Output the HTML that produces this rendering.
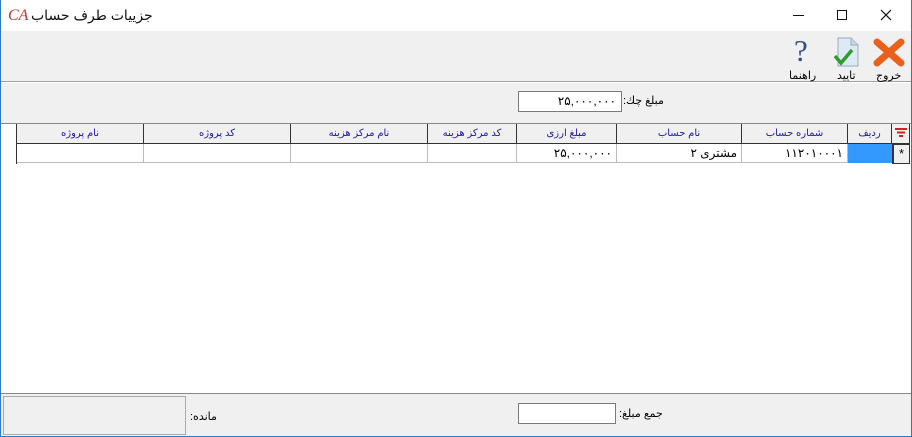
<!DOCTYPE html>
<html><head><meta charset="utf-8"><style>
*{margin:0;padding:0;box-sizing:border-box}
body{width:912px;height:437px;background:#fff;font-family:Tahoma,"Liberation Sans","DejaVu Sans",sans-serif;position:relative;overflow:hidden;font-size:11px}
.a{position:absolute}
.r{direction:rtl}
.win{left:0;top:0;width:912px;height:437px;border:1px solid #2b79c9;border-top:none}
.title{left:1px;top:0;width:910px;height:31px;background:#fff}
.tb{left:1px;top:31px;width:910px;height:51px;background:#f0f0f0;border-bottom:1px solid #a0a0a0}
.top2{left:1px;top:83px;width:910px;height:40px;background:#f0f0f0}
.grid{left:1px;top:123px;width:910px;height:270px;background:#fff;border-top:1px solid #888}
.foot{left:1px;top:393px;width:910px;height:43px;background:#f0f0f0;border-top:1px solid #888}
.hc{top:124px;height:20px;background:#f0f0f0;border-right:1px solid #333;border-bottom:1px solid #333;color:#1a1aa0;text-align:center;font-size:10px;line-height:19px;direction:rtl}
.dc{top:144px;height:19px;border-right:1px solid #bbb;border-bottom:1px solid #bbb;font-size:12px;line-height:18px;direction:rtl;padding-right:4px}
.in{background:#fff;border:1px solid #7a7a7a;height:21px;font-size:12px;line-height:19px;text-align:right;padding-right:5px}
</style></head><body>
<div class="a win"></div>
<div class="a title"></div>
<div class="a" style="left:8px;top:7px;color:#c0302f;font-family:'Liberation Serif',serif;font-size:16px;font-style:italic">CA</div>
<div class="a r" style="left:31px;top:7px;font-size:14px;color:#111">جزییات طرف حساب</div>
<div class="a" style="left:793px;top:15px;width:11px;height:1px;background:#111"></div>
<div class="a" style="left:837px;top:10px;width:10px;height:10px;border:1px solid #111"></div>
<svg class="a" style="left:880px;top:9px" width="12" height="12"><path d="M1 1L11 11M11 1L1 11" stroke="#111" stroke-width="1.2"/></svg>
<div class="a tb"></div>
<svg class="a" style="left:872px;top:37px" width="34" height="30"><path d="M5 5L29 26M29 5L5 26" stroke="#e8601c" stroke-width="7" stroke-linecap="round"/></svg>
<div class="a" style="left:876px;top:69px;font-size:11px">خروج</div>
<svg class="a" style="left:832px;top:36px" width="30" height="32"><path d="M6 2H19L26 9V30H6Z" fill="#dfe9f4" stroke="#9ab" /><path d="M19 2V9H26" fill="#c4d6ea" stroke="#9ab"/><path d="M3 20L9 27L20 14" fill="none" stroke="#2e9b2e" stroke-width="3.5"/></svg>
<div class="a" style="left:837px;top:69px;font-size:11px">تایید</div>
<div class="a" style="left:794px;top:33px;font-size:31px;color:#2d4f86;font-family:'Liberation Serif',serif">?</div>
<div class="a" style="left:789px;top:69px;font-size:11px">راهنما</div>
<div class="a top2"></div>
<div class="a r" style="left:623px;top:94px;font-size:11px">مبلغ چك:</div>
<div class="a in" style="left:518px;top:91px;width:104px">۲۵,۰۰۰,۰۰۰</div>
<div class="a grid"></div>
<div class="a" style="left:16px;top:124px;width:1px;height:40px;background:#333"></div>
<div class="a hc" style="left:17px;width:127px">نام پروژه</div>
<div class="a hc" style="left:144px;width:147px">کد پروژه</div>
<div class="a hc" style="left:291px;width:137px">نام مرکز هزینه</div>
<div class="a hc" style="left:428px;width:89px">کد مرکز هزینه</div>
<div class="a hc" style="left:517px;width:100px">مبلغ ارزی</div>
<div class="a hc" style="left:617px;width:125px">نام حساب</div>
<div class="a hc" style="left:742px;width:106px">شماره حساب</div>
<div class="a hc" style="left:848px;width:44px">ردیف</div>
<div class="a hc" style="left:892px;width:18px"></div>
<svg class="a" style="left:895px;top:128px" width="12" height="10"><path d="M0 1H12M2 4.5H10M4 8H8" stroke="#d02020" stroke-width="2"/></svg>
<div class="a dc" style="left:17px;width:127px"></div>
<div class="a dc" style="left:144px;width:147px"></div>
<div class="a dc" style="left:291px;width:137px"></div>
<div class="a dc" style="left:428px;width:89px"></div>
<div class="a dc" style="left:517px;width:100px">۲۵,۰۰۰,۰۰۰</div>
<div class="a dc" style="left:617px;width:125px">مشتری ۲</div>
<div class="a dc" style="left:742px;width:106px">۱۱۲۰۱۰۰۰۱</div>
<div class="a dc" style="left:848px;width:44px;background:#3399ff;border-color:#3399ff"></div>
<div class="a" style="left:892px;top:144px;width:18px;height:20px;background:#f0f0f0;border:1px solid #333;border-left:2px solid #333;font-size:13px;line-height:18px;text-align:center">*</div>
<div class="a foot"></div>
<div class="a" style="left:3px;top:396px;width:183px;height:39px;border:1px solid #aaa;background:#f0f0f0"></div>
<div class="a r" style="left:190px;top:410px;font-size:11px">مانده:</div>
<div class="a in" style="left:518px;top:403px;width:98px"></div>
<div class="a r" style="left:619px;top:407px;font-size:11px">جمع مبلغ:</div>
</body></html>
